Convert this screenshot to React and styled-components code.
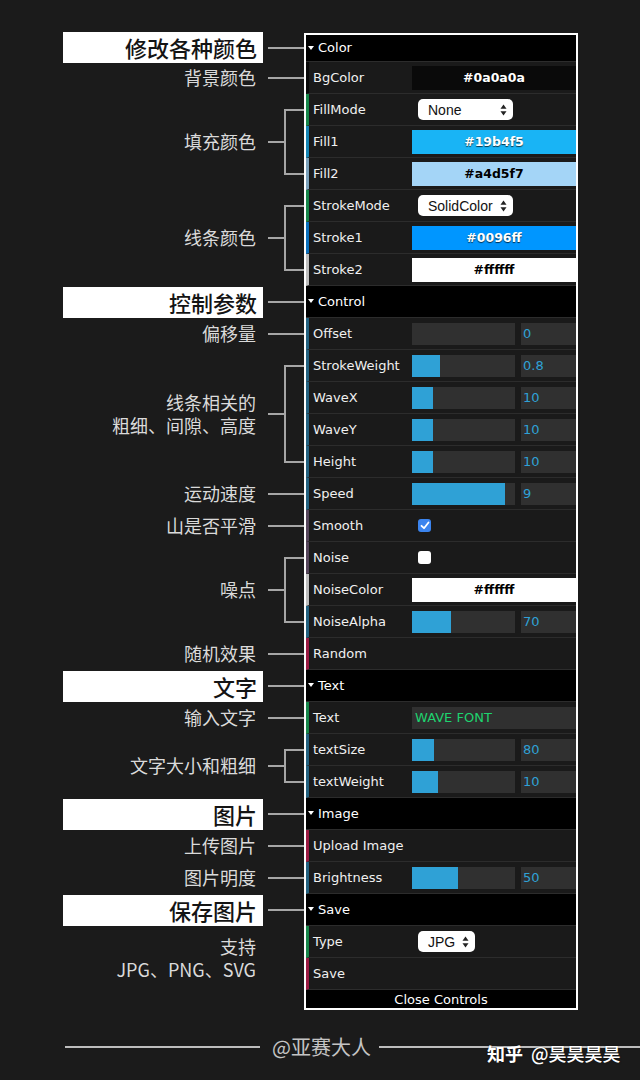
import React from "react";
import styled, { createGlobalStyle } from "styled-components";

const Global = createGlobalStyle`
  html, body { margin: 0; padding: 0; background: #1b1b1b; }
  body { width: 640px; height: 1080px; overflow: hidden; }
  * { box-sizing: border-box; }
`;

const LINE = "#a6a6a6";
const ROW = 32;

const Page = styled.div`
  position: relative;
  width: 640px;
  height: 1080px;
  padding-top: 33px;
  font-family: "Noto Sans CJK SC", "Noto Sans", sans-serif;
`;

const Figure = styled.div`
  display: flex;
  align-items: flex-start;
`;

const Notes = styled.div`
  width: 304px;
  display: flex;
  flex-direction: column;
`;

const Segment = styled.div`
  height: ${(p) => p.$h}px;
  display: flex;
  align-items: center;
  justify-content: flex-end;
`;

const Label = styled.div`
  color: #dadada;
  font-size: 18px;
  line-height: 23px;
  text-align: right;
  white-space: pre-line;
  margin-right: ${(p) => p.$gap}px;
  padding-bottom: 1px;
`;

const TitleBox = styled.div`
  width: 200px;
  height: 31px;
  background: #fff;
  color: #141414;
  font-size: 22px;
  font-weight: 500;
  line-height: 31px;
  text-align: right;
  padding-right: 6px;
  margin-right: 5px;
  flex-shrink: 0;
`;

const Stem = styled.div`
  width: ${(p) => p.$w}px;
  height: 2px;
  background: ${LINE};
  flex-shrink: 0;
`;

const Bracket = styled.div`
  width: 20px;
  height: ${(p) => p.$h}px;
  border: 2px solid ${LINE};
  border-right: none;
  flex-shrink: 0;
`;

const Panel = styled.div`
  width: 274px;
  border: 2px solid #fff;
  background: #1a1a1a;
  font-family: "DejaVu Sans", "Noto Sans", sans-serif;
  font-size: 13px;
  color: #eee;
`;

const Header = styled.div`
  height: ${(p) => (p.$first ? 27 : ROW)}px;
  background: #000;
  border-bottom: 1px solid #2c2c2c;
  display: flex;
  align-items: center;
  color: #fff;
  padding-bottom: 1px;
`;

const Caret = styled.span`
  width: 0;
  height: 0;
  border-left: 3px solid transparent;
  border-right: 3px solid transparent;
  border-top: 4px solid #fff;
  margin-left: 2px;
  margin-right: 4px;
`;

const Row = styled.div`
  height: ${ROW}px;
  display: grid;
  grid-template-columns: 103px 164px;
  align-items: center;
  background: #1a1a1a;
  border-bottom: 1px solid #2c2c2c;
  border-left: 3px solid ${(p) => p.$accent};
`;

const Name = styled.div`
  padding-left: 4px;
  color: #f0f0f0;
  white-space: nowrap;
`;

const Ctrl = styled.div`
  display: flex;
  align-items: center;
`;

const Swatch = styled.div`
  width: 164px;
  height: 24px;
  background: ${(p) => p.$bg};
  color: ${(p) => (p.$dark ? "#000" : "#fff")};
  text-shadow: ${(p) => (p.$dark ? "none" : "0 1px 1px rgba(0,0,0,0.7)")};
  font-weight: bold;
  font-size: 12.5px;
  line-height: 24px;
  text-align: center;
`;

const Track = styled.div`
  width: 103px;
  height: 22px;
  background: #303030;
`;

const Fill = styled.div`
  height: 100%;
  background: #2fa1d6;
`;

const NumBox = styled.div`
  width: 55px;
  height: 22px;
  margin-left: 6px;
  background: #303030;
  color: #2fa1d6;
  line-height: 22px;
  padding-left: 2px;
`;

const TextBox = styled.div`
  width: 164px;
  height: 22px;
  background: #303030;
  color: #1ed36f;
  line-height: 22px;
  padding-left: 3px;
`;

const Select = styled.div`
  margin-left: 6px;
  width: ${(p) => p.$w}px;
  height: 21px;
  background: #fff;
  border-radius: 5px;
  display: flex;
  align-items: center;
  justify-content: space-between;
  padding: 0 6px 0 10px;
  font-family: "Liberation Sans", Arial, sans-serif;
  font-size: 14px;
  color: #111;
`;

const Check = styled.div`
  margin-left: 6px;
  width: 13px;
  height: 13px;
  border-radius: 3px;
  background: ${(p) => (p.$on ? "#3b84ee" : "#fff")};
  display: flex;
  align-items: center;
  justify-content: center;
`;

const Close = styled.div`
  height: 18px;
  background: #000;
  color: #fff;
  text-align: center;
  line-height: 20px;
  overflow: hidden;
`;

const Footer = styled.div`
  position: relative;
  margin-top: 22px;
  height: 30px;
  display: flex;
  align-items: center;
  padding-left: 65px;
`;

const Rule = styled.div`
  height: 1.5px;
  background: #bdbdbd;
  width: ${(p) => (p.$w ? `${p.$w}px` : "auto")};
  flex: ${(p) => (p.$w ? "none" : "1")};
`;

const Sign = styled.div`
  color: #c4c4c4;
  font-size: 20px;
  margin: 0 8px 0 12px;
  line-height: 30px;
`;

const Mark = styled.div`
  position: absolute;
  left: 487px;
  top: 8px;
  color: #fff;
  font-size: 18px;
  font-weight: 500;
  white-space: nowrap;
  text-shadow: 0 0 2px rgba(0,0,0,0.5);
  b { font-weight: 700; margin-right: 8px; }
`;

const Arrows = () => (
  <svg width="7" height="12" viewBox="0 0 7 12">
    <path d="M3.5 0.5 L6.5 4.8 L0.5 4.8 Z" fill="#222" />
    <path d="M3.5 11.5 L6.5 7.2 L0.5 7.2 Z" fill="#222" />
  </svg>
);

const Tick = () => (
  <svg width="10" height="9" viewBox="0 0 10 9">
    <path d="M1.5 4.8 L4 7.2 L8.5 1.5" fill="none" stroke="#fff" strokeWidth="1.8" strokeLinecap="round" strokeLinejoin="round" />
  </svg>
);

const notes = [
  { kind: "title", text: "修改各种颜色", h: 29 },
  { kind: "single", text: "背景颜色", n: 1 },
  { kind: "bracket", text: "填充颜色", n: 3 },
  { kind: "bracket", text: "线条颜色", n: 3 },
  { kind: "title", text: "控制参数", n: 1 },
  { kind: "single", text: "偏移量", n: 1 },
  { kind: "bracket", text: "线条相关的\n粗细、间隙、高度", n: 4 },
  { kind: "single", text: "运动速度", n: 1 },
  { kind: "single", text: "山是否平滑", n: 1 },
  { kind: "bracket", text: "噪点", n: 3 },
  { kind: "single", text: "随机效果", n: 1 },
  { kind: "title", text: "文字", n: 1 },
  { kind: "single", text: "输入文字", n: 1 },
  { kind: "bracket", text: "文字大小和粗细", n: 2 },
  { kind: "title", text: "图片", n: 1 },
  { kind: "single", text: "上传图片", n: 1 },
  { kind: "single", text: "图片明度", n: 1 },
  { kind: "title", text: "保存图片", n: 1 },
  { kind: "plain", text: "支持\nJPG、PNG、SVG", n: 2 },
];

const Note = ({ note }) => {
  const h = note.h || note.n * ROW;
  if (note.kind === "title") {
    return (
      <Segment $h={h}>
        <TitleBox>{note.text}</TitleBox>
        <Stem $w={36} />
      </Segment>
    );
  }
  if (note.kind === "single") {
    return (
      <Segment $h={h}>
        <Label $gap={12}>{note.text}</Label>
        <Stem $w={36} />
      </Segment>
    );
  }
  if (note.kind === "bracket") {
    return (
      <Segment $h={h}>
        <Label $gap={12}>{note.text}</Label>
        <Stem $w={16} />
        <Bracket $h={(note.n - 1) * ROW + 2} />
      </Segment>
    );
  }
  return (
    <Segment $h={h}>
      <Label $gap={48}>{note.text}</Label>
    </Segment>
  );
};

const SliderCtrl = ({ pct, value }) => (
  <Ctrl>
    <Track>
      <Fill style={{ width: `${pct}%` }} />
    </Track>
    <NumBox>{value}</NumBox>
  </Ctrl>
);

const BLUE = "#23617f";
const GREEN = "#17864a";
const RED = "#9a1a42";
const PURPLE = "#55455a";

const sections = [
  {
    title: "Color",
    first: true,
    rows: [
      { name: "BgColor", accent: "#0a0a0a", type: "color", color: "#0a0a0a" },
      { name: "FillMode", accent: GREEN, type: "select", value: "None", w: 95 },
      { name: "Fill1", accent: "#1585b4", type: "color", color: "#19b4f5" },
      { name: "Fill2", accent: "#7aa0ba", type: "color", color: "#a4d5f7", dark: true },
      { name: "StrokeMode", accent: GREEN, type: "select", value: "SolidColor", w: 95 },
      { name: "Stroke1", accent: "#0a6fbb", type: "color", color: "#0096ff" },
      { name: "Stroke2", accent: "#bdbdbd", type: "color", color: "#ffffff", dark: true },
    ],
  },
  {
    title: "Control",
    rows: [
      { name: "Offset", accent: BLUE, type: "slider", pct: 0, value: "0" },
      { name: "StrokeWeight", accent: BLUE, type: "slider", pct: 27, value: "0.8" },
      { name: "WaveX", accent: BLUE, type: "slider", pct: 20.5, value: "10" },
      { name: "WaveY", accent: BLUE, type: "slider", pct: 20.5, value: "10" },
      { name: "Height", accent: BLUE, type: "slider", pct: 20.5, value: "10" },
      { name: "Speed", accent: BLUE, type: "slider", pct: 90, value: "9" },
      { name: "Smooth", accent: PURPLE, type: "check", on: true },
      { name: "Noise", accent: PURPLE, type: "check", on: false },
      { name: "NoiseColor", accent: "#bdbdbd", type: "color", color: "#ffffff", dark: true },
      { name: "NoiseAlpha", accent: BLUE, type: "slider", pct: 38, value: "70" },
      { name: "Random", accent: RED, type: "fn" },
    ],
  },
  {
    title: "Text",
    rows: [
      { name: "Text", accent: GREEN, type: "text", value: "WAVE FONT" },
      { name: "textSize", accent: BLUE, type: "slider", pct: 21.5, value: "80" },
      { name: "textWeight", accent: BLUE, type: "slider", pct: 25, value: "10" },
    ],
  },
  {
    title: "Image",
    rows: [
      { name: "Upload Image", accent: RED, type: "fn" },
      { name: "Brightness", accent: BLUE, type: "slider", pct: 45, value: "50" },
    ],
  },
  {
    title: "Save",
    rows: [
      { name: "Type", accent: GREEN, type: "select", value: "JPG", w: 57 },
      { name: "Save", accent: RED, type: "fn" },
    ],
  },
];

const Control = ({ row }) => {
  switch (row.type) {
    case "color":
      return (
        <Ctrl>
          <Swatch $bg={row.color} $dark={row.dark}>{row.color}</Swatch>
        </Ctrl>
      );
    case "select":
      return (
        <Ctrl>
          <Select $w={row.w}>
            <span>{row.value}</span>
            <Arrows />
          </Select>
        </Ctrl>
      );
    case "slider":
      return <SliderCtrl pct={row.pct} value={row.value} />;
    case "check":
      return (
        <Ctrl>
          <Check $on={row.on}>{row.on && <Tick />}</Check>
        </Ctrl>
      );
    case "text":
      return (
        <Ctrl>
          <TextBox>{row.value}</TextBox>
        </Ctrl>
      );
    default:
      return <Ctrl />;
  }
};

export default function App() {
  return (
    <Page>
      <Global />
      <Figure>
        <Notes>
          {notes.map((n, i) => (
            <Note key={i} note={n} />
          ))}
        </Notes>
        <Panel>
          {sections.map((s) => (
            <React.Fragment key={s.title}>
              <Header $first={s.first}>
                <Caret />
                {s.title}
              </Header>
              {s.rows.map((r) => (
                <Row key={r.name} $accent={r.accent}>
                  <Name>{r.name}</Name>
                  <Control row={r} />
                </Row>
              ))}
            </React.Fragment>
          ))}
          <Close>Close Controls</Close>
        </Panel>
      </Figure>
      <Footer>
        <Rule $w={195} />
        <Sign>@亚赛大人</Sign>
        <Rule />
        <Mark>
          <b>知乎</b>@昊昊昊昊
        </Mark>
      </Footer>
    </Page>
  );
}
